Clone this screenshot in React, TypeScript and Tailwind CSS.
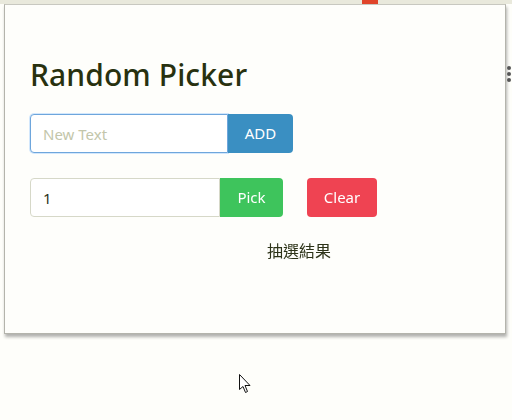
import { useState } from "react";

const font = { fontFamily: '"Noto Sans", "Noto Sans CJK TC", sans-serif' };

const App = () => {
  const [text, setText] = useState("");
  const [count, setCount] = useState("1");

  return (
    <div
      className="relative w-[512px] h-[420px] overflow-hidden bg-[#fefefa] text-[#2d3318]"
      style={font}
    >
      {/* browser toolbar strip behind the popup */}
      <div className="h-[4px] bg-[#e9e9dc] flex">
        <div className="ml-[362px] w-[16px] h-[4px] bg-[#e0442a]" />
      </div>
      <div className="absolute right-[1px] top-[66px] flex flex-col gap-[2px]">
        <span className="w-[4px] h-[4px] rounded-full bg-[#555]" />
        <span className="w-[4px] h-[4px] rounded-full bg-[#555]" />
        <span className="w-[4px] h-[4px] rounded-full bg-[#555]" />
      </div>

      <div className="ml-[4px] w-[502px] h-[330px] border border-[#b4b4ac] border-t-[#c8c8c0] bg-[#fefefb] shadow-[1px_3px_3px_rgba(0,0,0,0.3)] px-[25px] pt-[47px]">
        <h1 className="text-[30px] leading-[45px] font-medium text-[#28310f] tracking-[0.1px]">
          Random Picker
        </h1>

        <div className="mt-[17px] flex">
          <input
            value={text}
            onChange={(e) => setText(e.target.value)}
            placeholder="New Text"
            autoFocus
            className="w-[198px] h-[39px] px-[12px] rounded-l-[4px] border border-[#6ea6dc] bg-white text-[15px] outline-none shadow-[0_0_0_1px_rgba(128,189,255,0.35)] placeholder:text-[#c3c6aa]"
          />
          <button className="w-[65px] h-[39px] rounded-r-[4px] bg-[#3a8fc2] text-white text-[15px]">
            ADD
          </button>
        </div>

        <div className="mt-[25px] flex items-center">
          <input
            value={count}
            onChange={(e) => setCount(e.target.value)}
            className="w-[190px] h-[39px] px-[12px] rounded-l-[4px] border border-[#d6d8c8] bg-white text-[15px] text-[#2d3318] outline-none"
          />
          <button className="w-[63px] h-[39px] rounded-r-[4px] bg-[#3ec45c] text-white text-[15px]">
            Pick
          </button>
          <button className="ml-[24px] w-[70px] h-[39px] rounded-[4px] bg-[#ef4352] text-white text-[15px]">
            Clear
          </button>
        </div>

        <p className="mt-[22px] pl-[237px] text-[16px] leading-[24px] text-[#2d3318]">抽選結果</p>
      </div>

      {/* mouse cursor */}
      <svg className="absolute left-[239px] top-[374px]" width="12" height="20" viewBox="0 0 12 20">
        <path d="M0.5 0.5 L0.5 15.5 L4 12.5 L6.5 18.5 L8.5 17.5 L6 11.5 L11 11.5 Z" fill="white" stroke="#111" strokeWidth="1" />
      </svg>
    </div>
  );
};

export default App;
